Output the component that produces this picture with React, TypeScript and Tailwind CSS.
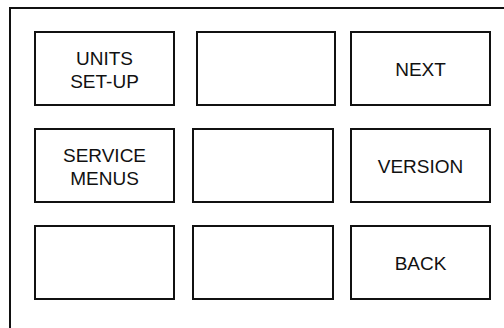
import React from "react";

function Box({ label, w = 141 }: { label?: string[]; w?: number }) {
  return (
    <div
      className="h-[75px] pt-[2px] border-2 border-[#111] flex flex-col items-center justify-center text-[19px] leading-[23px] text-[#111] text-center shrink-0"
      style={{ width: w }}
    >
      {label?.map((l) => (
        <span key={l}>{l}</span>
      ))}
    </div>
  );
}

export default function App() {
  return (
    <div
      className="w-[504px] h-[328px] bg-white overflow-hidden pl-[9px] pt-[7px]"
      style={{ fontFamily: '"Liberation Sans", Arial, sans-serif' }}
    >
      <div className="w-[495px] h-[321px] border-l-[2px] border-t-[2px] border-[#111] pl-[23px] pt-[22px] flex flex-col gap-[22px]">
        <div className="flex">
          <Box label={["UNITS", "SET-UP"]} />
          <div className="ml-[21px]">
            <Box w={140} />
          </div>
          <div className="ml-[14px]">
            <Box label={["NEXT"]} />
          </div>
        </div>
        <div className="flex gap-[16px]">
          <Box label={["SERVICE", "MENUS"]} />
          <div className="ml-[1px]">
            <Box w={142} />
          </div>
          <Box label={["VERSION"]} />
        </div>
        <div className="flex gap-[16px]">
          <Box />
          <div className="ml-[1px]">
            <Box w={142} />
          </div>
          <Box label={["BACK"]} />
        </div>
      </div>
    </div>
  );
}
